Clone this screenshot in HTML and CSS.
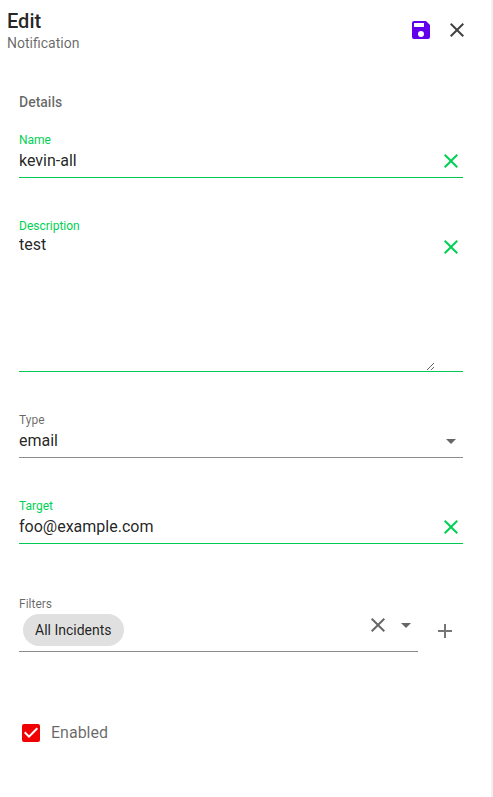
FILE: index.html
```html
<!DOCTYPE html>
<html lang="en">
<head>
<meta charset="utf-8">
<meta name="viewport" content="width=device-width, initial-scale=1">
<title>Edit Notification</title>
<link rel="stylesheet" href="styles.css">
</head>
<body>
<form class="drawer">
  <header class="drawer-header">
    <div class="heading">
      <h1 class="title">Edit</h1>
      <p class="subtitle">Notification</p>
    </div>
    <div class="actions">
      <button class="icon-button save" type="submit" aria-label="Save">
        <svg viewBox="0 0 24 24"><path d="M15 9H5V5h10m-3 14a3 3 0 0 1-3-3 3 3 0 0 1 3-3 3 3 0 0 1 3 3 3 3 0 0 1-3 3m5-16H5a2 2 0 0 0-2 2v14a2 2 0 0 0 2 2h14a2 2 0 0 0 2-2V7z"/></svg>
      </button>
      <button class="icon-button close" type="button" aria-label="Close">
        <svg viewBox="0 0 24 24"><path d="M19 6.41L17.59 5 12 10.59 6.41 5 5 6.41 10.59 12 5 17.59 6.41 19 12 13.41 17.59 19 19 17.59 13.41 12z"/></svg>
      </button>
    </div>
  </header>

  <main class="content">
    <h2 class="section-title">Details</h2>

    <div class="field valid">
      <label class="label" for="name">Name</label>
      <div class="control">
        <input class="value" id="name" type="text" value="kevin-all">
        <button class="icon-button" type="button" aria-label="Clear name">
          <svg viewBox="0 0 24 24"><path d="M19 6.41L17.59 5 12 10.59 6.41 5 5 6.41 10.59 12 5 17.59 6.41 19 12 13.41 17.59 19 19 17.59 13.41 12z"/></svg>
        </button>
      </div>
    </div>

    <div class="field valid">
      <label class="label" for="description">Description</label>
      <div class="control multiline">
        <textarea class="value" id="description">test</textarea>
        <button class="icon-button" type="button" aria-label="Clear description">
          <svg viewBox="0 0 24 24"><path d="M19 6.41L17.59 5 12 10.59 6.41 5 5 6.41 10.59 12 5 17.59 6.41 19 12 13.41 17.59 19 19 17.59 13.41 12z"/></svg>
        </button>
      </div>
    </div>

    <div class="field">
      <label class="label" for="type">Type</label>
      <div class="control select">
        <select class="value" id="type"><option>email</option></select>
        <svg class="arrow" viewBox="0 0 24 24"><path d="M7 10l5 5 5-5z"/></svg>
      </div>
    </div>

    <div class="field valid">
      <label class="label" for="target">Target</label>
      <div class="control">
        <input class="value" id="target" type="text" value="foo@example.com">
        <button class="icon-button" type="button" aria-label="Clear target">
          <svg viewBox="0 0 24 24"><path d="M19 6.41L17.59 5 12 10.59 6.41 5 5 6.41 10.59 12 5 17.59 6.41 19 12 13.41 17.59 19 19 17.59 13.41 12z"/></svg>
        </button>
      </div>
    </div>

    <div class="filters">
      <div class="field">
        <span class="label" id="filters-label">Filters</span>
        <div class="control chips" role="group" aria-labelledby="filters-label">
          <button class="chip" type="button">All Incidents</button>
          <button class="icon-button" type="button" aria-label="Clear filters">
            <svg viewBox="0 0 24 24"><path d="M19 6.41L17.59 5 12 10.59 6.41 5 5 6.41 10.59 12 5 17.59 6.41 19 12 13.41 17.59 19 19 17.59 13.41 12z"/></svg>
          </button>
          <button class="icon-button" type="button" aria-label="Show filters">
            <svg viewBox="0 0 24 24"><path d="M7 10l5 5 5-5z"/></svg>
          </button>
        </div>
      </div>
      <button class="icon-button add" type="button" aria-label="Add filter">
        <svg viewBox="0 0 24 24"><path d="M19 13h-6v6h-2v-6H5v-2h6V5h2v6h6z"/></svg>
      </button>
    </div>

    <label class="toggle">
      <input class="checkbox" type="checkbox" checked>
      <svg class="tick" viewBox="0 0 24 24"><path d="M10 17l-5-5 1.41-1.42L10 14.17l7.59-7.59L19 8z"/></svg>
      Enabled
    </label>
  </main>
</form>
</body>
</html>
```
FILE: styles.css
```css
* {
  box-sizing: border-box;
}

body {
  margin: 0;
  background: #fff;
  color: rgba(0, 0, 0, 0.87);
  font: 16px/24px Roboto, "Liberation Sans", sans-serif;
}

svg {
  display: block;
  width: 24px;
  height: 24px;
  fill: currentColor;
}

.drawer {
  min-height: 100vh;
  border-right: 2px solid #f1f1f1;
}

.drawer-header {
  display: flex;
  justify-content: space-between;
  align-items: center;
  height: 60px;
  padding: 0 22px 0 7px;
}

.heading {
  padding-top: 2px;
}

.title {
  margin: 0;
  font-size: 20px;
  font-weight: 500;
  line-height: 24px;
}

.subtitle {
  margin: 0;
  color: rgba(0, 0, 0, 0.6);
  font-size: 14px;
  line-height: 20px;
}

.actions {
  display: flex;
  gap: 12px;
}

.icon-button {
  flex: none;
  width: 24px;
  height: 24px;
  padding: 0;
  border: 0;
  background: none;
  color: inherit;
  cursor: pointer;
}

.save {
  color: #6200ee;
}

.close {
  color: #424242;
}

.content {
  display: flex;
  flex-direction: column;
  padding: 32px 28px 32px 19px;
}

.section-title {
  margin: 0 0 19px;
  color: rgba(0, 0, 0, 0.6);
  font-size: 14px;
  font-weight: 500;
  line-height: 20px;
}

.field {
  flex: 1;
  margin-bottom: 39px;
  color: rgba(0, 0, 0, 0.6);
}

.field.valid {
  color: #00d154;
}

.label {
  display: block;
  font-size: 12px;
  line-height: 18px;
}

.control {
  display: flex;
  align-items: center;
  padding-bottom: 4px;
  border-bottom: 1px solid #8c8c8c;
}

.valid .control {
  border-color: #00c853;
}

.value {
  display: block;
  flex: 1;
  min-width: 0;
  height: 24px;
  margin: 0;
  padding: 0;
  border: 0;
  outline: 0;
  background: none;
  color: rgba(0, 0, 0, 0.87);
  font: inherit;
  appearance: none;
}

.multiline {
  align-items: flex-start;
  padding-bottom: 0;
}

.multiline .value {
  height: 136px;
  margin-right: 4px;
  line-height: 20px;
  resize: vertical;
}

.select {
  display: grid;
}

.select .value,
.select .arrow {
  grid-area: 1 / 1;
}

.select .value {
  width: 100%;
}

.arrow {
  justify-self: end;
  pointer-events: none;
}

.filters {
  display: flex;
  align-items: flex-start;
  gap: 15px;
  margin-top: 12px;
}

.chips {
  gap: 4px;
  padding: 0 0 5px 4px;
}

.chip {
  height: 32px;
  margin: 1px auto 0 0;
  padding: 0 12px;
  border: 0;
  border-radius: 16px;
  background: #e0e0e0;
  color: rgba(0, 0, 0, 0.87);
  font: 14px/20px Roboto, "Liberation Sans", sans-serif;
}

.chips .icon-button {
  align-self: flex-start;
}

.add {
  margin: 24px 6px 0 0;
  color: #757575;
}

.toggle {
  display: grid;
  grid-template-columns: 24px auto;
  justify-content: start;
  align-items: center;
  column-gap: 8px;
  margin-top: 30px;
  color: rgba(0, 0, 0, 0.6);
}

.checkbox {
  grid-area: 1 / 1;
  justify-self: center;
  width: 18px;
  height: 18px;
  margin: 0;
  border: 2px solid #757575;
  border-radius: 2px;
  appearance: none;
}

.checkbox:checked {
  border-color: #f00000;
  background: #f00000;
}

.tick {
  grid-area: 1 / 1;
  color: #fff;
  pointer-events: none;
}

.checkbox:not(:checked) + .tick {
  visibility: hidden;
}
```
